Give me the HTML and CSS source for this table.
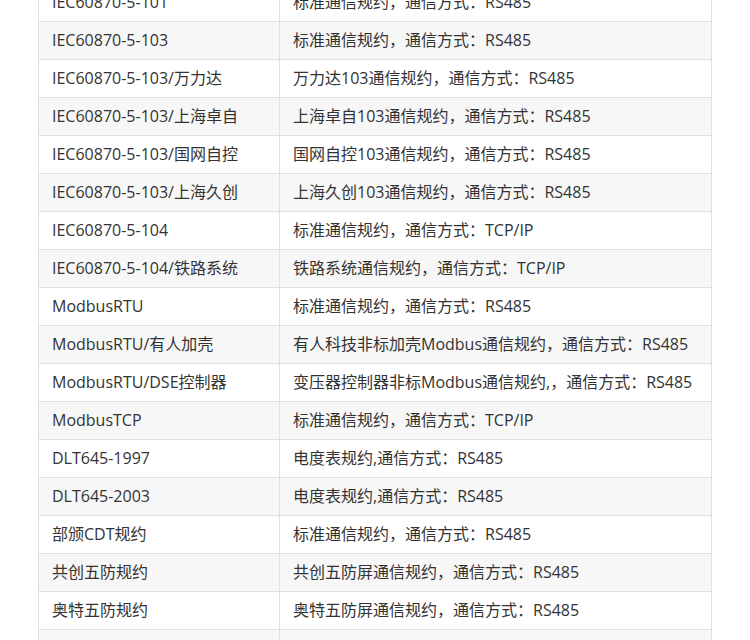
FILE: index.html
```html
<!DOCTYPE html>
<html lang="zh-CN">
<head>
<meta charset="utf-8">
<link rel="stylesheet" href="styles.css">
</head>
<body>
<div class="page">
<table class="proto">
<tbody>
<tr><td>IEC60870-5-101</td><td>标准通信规约，通信方式：RS485</td></tr>
<tr><td>IEC60870-5-103</td><td>标准通信规约，通信方式：RS485</td></tr>
<tr><td>IEC60870-5-103/万力达</td><td>万力达103通信规约，通信方式：RS485</td></tr>
<tr><td>IEC60870-5-103/上海卓自</td><td>上海卓自103通信规约，通信方式：RS485</td></tr>
<tr><td>IEC60870-5-103/国网自控</td><td>国网自控103通信规约，通信方式：RS485</td></tr>
<tr><td>IEC60870-5-103/上海久创</td><td>上海久创103通信规约，通信方式：RS485</td></tr>
<tr><td>IEC60870-5-104</td><td>标准通信规约，通信方式：TCP/IP</td></tr>
<tr><td>IEC60870-5-104/铁路系统</td><td>铁路系统通信规约，通信方式：TCP/IP</td></tr>
<tr><td>ModbusRTU</td><td>标准通信规约，通信方式：RS485</td></tr>
<tr><td>ModbusRTU/有人加壳</td><td>有人科技非标加壳Modbus通信规约，通信方式：RS485</td></tr>
<tr><td>ModbusRTU/DSE控制器</td><td>变压器控制器非标Modbus通信规约,，通信方式：RS485</td></tr>
<tr><td>ModbusTCP</td><td>标准通信规约，通信方式：TCP/IP</td></tr>
<tr><td>DLT645-1997</td><td>电度表规约,通信方式：RS485</td></tr>
<tr><td>DLT645-2003</td><td>电度表规约,通信方式：RS485</td></tr>
<tr><td>部颁CDT规约</td><td>标准通信规约，通信方式：RS485</td></tr>
<tr><td>共创五防规约</td><td>共创五防屏通信规约，通信方式：RS485</td></tr>
<tr><td>奥特五防规约</td><td>奥特五防屏通信规约，通信方式：RS485</td></tr>
<tr><td>&nbsp;</td><td>&nbsp;</td></tr>
</tbody>
</table>
</div>
</body>
</html>
```
FILE: styles.css
```css
html, body {
  margin: 0;
  padding: 0;
  background: #ffffff;
}
.page {
  padding-left: 38px;
  margin-top: -17px;
  height: 657px;
  overflow: hidden;
}
.proto {
  border-collapse: collapse;
  width: 674px;
  font-family: "Open Sans", "Noto Sans CJK SC", sans-serif;
  font-size: 16px;
  color: #333333;
}
.proto td {
  border: 1px solid #e0e0e0;
  height: 38px;
  padding: 0 13px 2px;
  box-sizing: border-box;
  line-height: 20px;
  white-space: nowrap;
}
.proto td:first-child {
  width: 241px;
}
.proto tr:nth-child(even) td {
  background: #f7f7f7;
}
```
